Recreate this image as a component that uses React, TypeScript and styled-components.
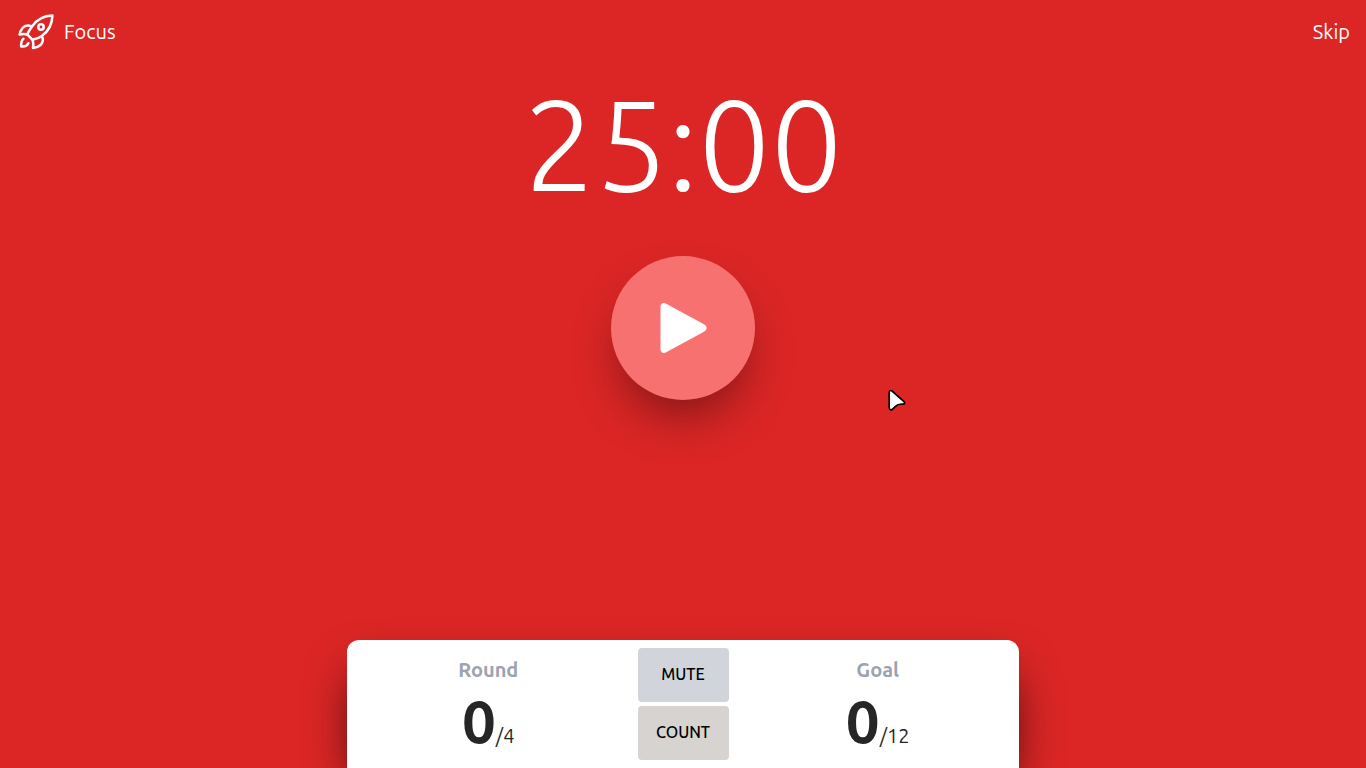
import React from "react";
import styled, { createGlobalStyle } from "styled-components";

const GlobalStyle = createGlobalStyle`
  *, *::before, *::after { box-sizing: border-box; }
  body {
    margin: 0;
    background: #dc2626;
    font-family: Ubuntu, "Noto Sans", "Open Sans", sans-serif;
  }
  button { border: 0; padding: 0; font-family: inherit; cursor: pointer; }
`;

const Page = styled.div`
  position: relative;
  display: flex;
  flex-direction: column;
  align-items: center;
  min-height: 100vh;
  overflow: hidden;
  color: #fff;
`;

const TopBar = styled.header`
  display: flex;
  align-items: center;
  justify-content: space-between;
  width: 100%;
  height: 64px;
  padding: 0 16px;
  font-size: 20px;
  line-height: 28px;
`;

const Mode = styled.div`
  display: flex;
  align-items: center;
  gap: 8px;
`;

const SkipButton = styled.button`
  background: none;
  color: inherit;
  font-size: inherit;
  line-height: inherit;
`;

const Timer = styled.main`
  display: flex;
  flex: 1;
  flex-direction: column;
  align-items: center;
  gap: 48px;
  padding-top: 16px;
`;

const Clock = styled.time`
  font-size: 128px;
  font-weight: 300;
  line-height: 128px;
`;

const PlayButton = styled.button`
  display: grid;
  place-items: center;
  width: 144px;
  height: 144px;
  border-radius: 50%;
  background: #f87171;
  color: #fff;
  box-shadow: 0 25px 50px -12px rgba(0, 0, 0, 0.45);
`;

const Panel = styled.footer`
  display: grid;
  grid-template-columns: 1fr 91px 1fr;
  gap: 8px;
  width: 100%;
  max-width: 672px;
  padding: 8px 0;
  border-radius: 12px 12px 0 0;
  background: #fff;
  color: #262626;
  box-shadow: 0 25px 50px -12px rgba(0, 0, 0, 0.9);
`;

const Stat = styled.section`
  display: flex;
  flex-direction: column;
  align-items: center;
  gap: 7px;
  padding-top: 8px;
`;

const StatLabel = styled.h2`
  margin: 0;
  color: #9ca3af;
  font-size: 20px;
  font-weight: 700;
  line-height: 28px;
`;

const StatValue = styled.p`
  display: flex;
  align-items: baseline;
  margin: 0;
  font-size: 20px;
  line-height: 28px;
`;

const Current = styled.span`
  font-size: 60px;
  font-weight: 600;
  line-height: 60px;
`;

const Actions = styled.div`
  display: grid;
  grid-template-rows: 54px 54px;
  gap: 4px;
`;

const ActionButton = styled.button<{ $tone: string }>`
  padding-bottom: 2px;
  border-radius: 4px;
  background: ${({ $tone }) => $tone};
  color: #000;
  font-size: 16px;
  font-weight: 500;
  line-height: 24px;
  text-transform: uppercase;
`;

const Pointer = styled.svg`
  position: absolute;
  top: 388px;
  left: calc(50% + 204px);
  pointer-events: none;
`;

const RocketIcon = () => (
  <svg
    width="40"
    height="40"
    viewBox="0 0 40 40"
    fill="none"
    stroke="currentColor"
    strokeWidth="2.5"
    strokeLinecap="round"
    strokeLinejoin="round"
    aria-hidden="true"
  >
    <path d="M36.4 3.6C27.5 3.8 20.5 8.2 16 14.5C13.6 17.8 12.2 20.3 11.2 22.4L16.6 27.8C20 27 23 26 25.8 24C31.8 19.6 36.2 12.6 36.4 3.6Z" />
    <path d="M15.4 14.2C12 13 8.6 13.6 6.6 16C5 18 3.8 20.5 3.6 22.6C6.2 21.9 8.6 21.9 11.2 22.4" />
    <path d="M26 24.2C27.4 27.4 26.8 30.8 24.4 33C22.4 34.8 19.6 35.9 17 36C17.5 33 17.5 30.6 16.6 27.8" />
    <path d="M7.4 26.8C5.4 28.4 5 31 5.2 34.4C8.6 34.8 11.2 33.8 12.4 31.2" />
    <circle cx="25" cy="15" r="2.7" />
  </svg>
);

const PlayIcon = () => (
  <svg width="48" height="50" viewBox="0 0 48 50" fill="currentColor" aria-hidden="true">
    <path d="M1.5 4Q1.5 0 5 0Q6 0 7.2.7L45.4 21.5Q47.6 22.8 47.6 25Q47.6 27.2 45.4 28.5L7.2 49.3Q6 50 5 50Q1.5 50 1.5 46Z" />
  </svg>
);

interface CounterProps {
  label: string;
  value: number;
  total: number;
}

const Counter = ({ label, value, total }: CounterProps) => (
  <Stat>
    <StatLabel>{label}</StatLabel>
    <StatValue>
      <Current>{value}</Current>
      <span>/{total}</span>
    </StatValue>
  </Stat>
);

export default function App() {
  return (
    <>
      <GlobalStyle />
      <Page>
        <TopBar>
          <Mode>
            <RocketIcon />
            <span>Focus</span>
          </Mode>
          <SkipButton type="button">Skip</SkipButton>
        </TopBar>
        <Timer>
          <Clock>25:00</Clock>
          <PlayButton type="button" aria-label="Start timer">
            <PlayIcon />
          </PlayButton>
        </Timer>
        <Panel>
          <Counter label="Round" value={0} total={4} />
          <Actions>
            <ActionButton type="button" $tone="#d1d5db">Mute</ActionButton>
            <ActionButton type="button" $tone="#d6d3d1">Count</ActionButton>
          </Actions>
          <Counter label="Goal" value={0} total={12} />
        </Panel>
        <Pointer width="20" height="24" viewBox="0 0 20 24" aria-hidden="true">
          <path
            d="M2.2 4.4Q2.4 1.6 5 3L17 13.6Q18.8 15.8 16.2 16.1Q11 15.6 8.5 18.3L5.6 21.2Q2.7 23 2.2 19.5Z"
            fill="#fff"
            stroke="#000"
            strokeWidth="1.7"
            strokeLinejoin="round"
          />
        </Pointer>
      </Page>
    </>
  );
}
